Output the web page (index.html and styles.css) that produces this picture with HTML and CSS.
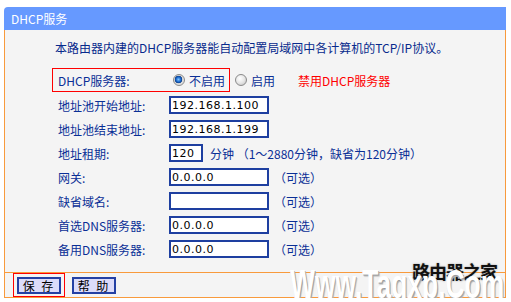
FILE: index.html
```html
<!DOCTYPE html>
<html lang="zh-CN">
<head>
    <meta charset="UTF-8">
    <title>DHCP服务</title>
    <link rel="stylesheet" href="styles.css">
</head>
<body>

<div class="panel">
    <div class="panel-title">DHCP服务</div>

    <div class="panel-body">
        <p class="intro">本路由器内建的DHCP服务器能自动配置局域网中各计算机的TCP/IP协议。</p>

        <!-- DHCP on/off -->
        <div class="row row-switch">
            <div class="highlight">
                <span class="label">DHCP服务器:</span>
                <span class="radio checked"></span><span class="radio-text">不启用</span>
            </div>
            <span class="radio second"></span><span class="radio-text">启用</span>
            <span class="warn">禁用DHCP服务器</span>
        </div>

        <div class="row"><span class="label">地址池开始地址:</span><input class="field" type="text" value="192.168.1.100"></div>
        <div class="row"><span class="label">地址池结束地址:</span><input class="field" type="text" value="192.168.1.199"></div>
        <div class="row">
            <span class="label">地址租期:</span><input class="field short" type="text" value="120">
            <span class="hint">分钟 （1～2880分钟，缺省为120分钟）</span>
        </div>
        <div class="row"><span class="label">网关:</span><input class="field" type="text" value="0.0.0.0"><span class="optional">（可选）</span></div>
        <div class="row"><span class="label">缺省域名:</span><input class="field" type="text" value=""><span class="optional">（可选）</span></div>
        <div class="row"><span class="label">首选DNS服务器:</span><input class="field" type="text" value="0.0.0.0"><span class="optional">（可选）</span></div>
        <div class="row"><span class="label">备用DNS服务器:</span><input class="field" type="text" value="0.0.0.0"><span class="optional">（可选）</span></div>
    </div>

    <div class="panel-foot">
        <div class="highlight btn-box"><button class="btn">保 存</button></div>
        <button class="btn">帮 助</button>
    </div>

    <!-- site watermark -->
    <div class="watermark">
        <span class="wm-cn">路由器之家</span>
        <span class="wm-en">Www.Tagxp.Com</span>
    </div>
</div>

</body>
</html>
```

FILE: styles.css
```css
/* Basic styling */
body { margin: 0; background: #FFFFFF; font-family: "Noto Sans CJK SC", "Noto Sans", sans-serif; font-size: 12px; color: #0a2f96; }

/* Panel */
.panel { position: relative; width: 502px; margin: 7px 0 0 4px; overflow: hidden; }
.panel-title {
    height: 23px;
    line-height: 23px;
    padding-left: 7px;
    background-color: #6699FF;
    color: #FFFFFF;
    border-top-left-radius: 4px;
}
.panel-body {
    background-color: #F4F4F4;
    border-left: 1px solid #F89A3C;
    border-right: 1px solid #F89A3C;
    border-bottom: 1px solid #F89A3C;
    padding: 9px 0 11px 0;
}
.intro { margin: 0 0 11px 50px; line-height: 18px; color: #082a8c; }

/* Rows */
.row { display: flex; align-items: center; height: 24px; padding-left: 53px; }
.label { width: 111px; flex-shrink: 0; }
.row-switch { padding-left: 47px; margin-bottom: 1px; }
.highlight { display: flex; align-items: center; border: 1px solid #FF0000; }
.row-switch .highlight { height: 22px; padding: 0 4px 0 5px; }

/* Radio */
.radio {
    width: 10px;
    height: 10px;
    border-radius: 50%;
    border: 1px solid #8A8A8A;
    background: radial-gradient(circle at 40% 35%, #FFFFFF 0%, #E6E6E6 50%, #BDBDBD 100%);
    margin: 0 4px 0 4px;
}
.radio.checked {
    background: radial-gradient(circle at 45% 45%, #7FC4FF 0%, #1664C8 32%, #0C3F8C 45%, #D8D8D8 52%, #F4F4F4 100%);
}
.radio.second { margin-left: 5px; }
.warn { color: #FF0000; margin-left: 23px; }

/* Inputs */
.field {
    box-sizing: border-box;
    width: 100px;
    height: 18px;
    padding: 0 2px;
    border: 1px solid #1E3FA0;
    box-shadow: inset 0 0 0 1px #1E3FA0;
    background: #FFFFFF;
    font-family: "DejaVu Sans", sans-serif;
    font-size: 11px;
    letter-spacing: 0.5px;
    color: #000000;
    outline: none;
}
.field.short { width: 34px; }
.hint { margin-left: 7px; }
.optional { margin-left: 5px; }

/* Footer */
.panel-foot {
    display: flex;
    align-items: center;
    gap: 7px;
    height: 24px;
    padding-left: 8px;
    background-color: #F4F4F4;
    border-left: 1px solid #F89A3C;
    border-right: 1px solid #F89A3C;
    border-bottom: 1px solid #F89A3C;
}
.btn-box { box-sizing: border-box; height: 24px; padding: 0 3px; }
.btn {
    width: 44px;
    height: 17px;
    padding: 0;
    border: 1px solid #2440A4;
    box-shadow: inset 0 0 0 1px #2440A4;
    background-color: #DCDCFA;
    font-family: "Noto Sans CJK SC", sans-serif;
    font-size: 12px;
    line-height: 15px;
    letter-spacing: 2px;
    color: #000000;
    cursor: pointer;
}

/* Watermark */
.watermark { position: absolute; left: 280px; top: 250px; width: 222px; height: 52px; pointer-events: none; }
.wm-cn {
    position: absolute;
    left: 128px;
    top: 1px;
    font-size: 18px;
    font-weight: bold;
    letter-spacing: -1px;
    color: #111111;
    text-shadow: 0 0 2px #9A9A9A;
}
.wm-en {
    position: absolute;
    left: 6px;
    top: 5px;
    font-family: "Liberation Sans", Arial, sans-serif;
    font-size: 40px;
    font-weight: bold;
    color: #FFFFFF;
    white-space: nowrap;
    transform: scaleX(0.66);
    transform-origin: left top;
    text-shadow: 1px 1px 0 #9C9C9C, 2px 2px 1px #B8B8B8;
}
```
